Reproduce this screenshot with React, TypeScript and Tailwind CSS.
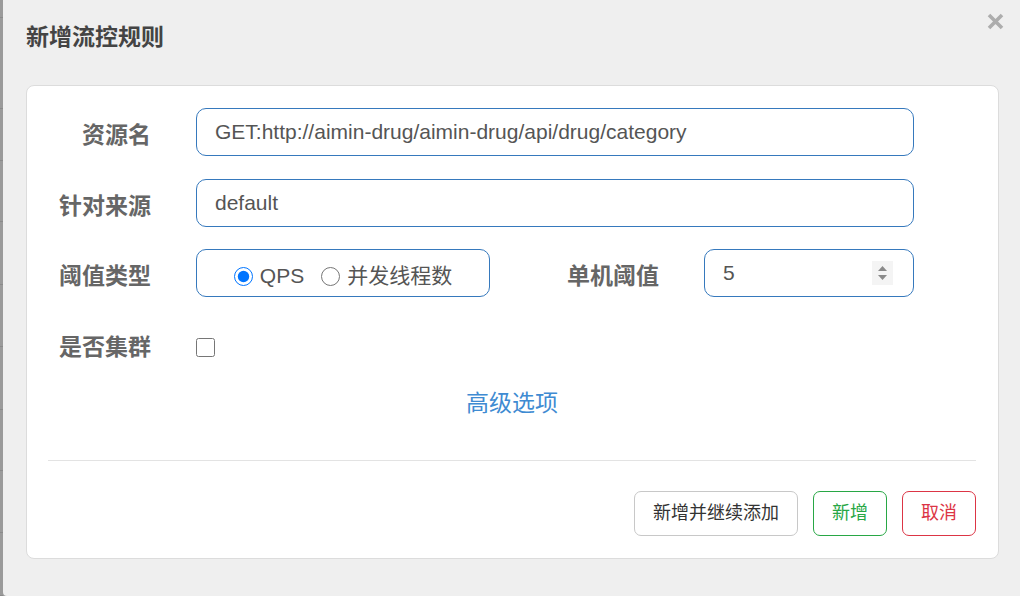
import React from "react";

const FONT = { fontFamily: '"Liberation Sans", "Noto Sans CJK SC", sans-serif' };

const STRIP_ROWS = [18, 91, 53, 61, 63, 62, 63, 62, 62, 63];

function FormLabel({ children, nudge = true }: { children: React.ReactNode; nudge?: boolean }) {
  return (
    <div
      className={
        nudge
          ? "w-[103px] shrink-0 pt-[6px] text-right text-[23px] font-bold leading-[42px] text-[#666]"
          : "w-[103px] shrink-0 text-right text-[23px] font-bold leading-[48px] text-[#666]"
      }
    >
      {children}
    </div>
  );
}

function TextField({ value }: { value: string }) {
  return (
    <input
      readOnly
      defaultValue={value}
      style={FONT}
      className="h-[48px] w-[718px] rounded-[10px] border border-[#3679bd] bg-white px-[18px] text-[21px] text-[#555] outline-none"
    />
  );
}

export default function App() {
  return (
    <div className="flex h-[596px] w-[1020px] overflow-hidden bg-[#9a9a9a]" style={FONT}>
      {/* page behind the overlay */}
      <div className="flex w-[3px] shrink-0 flex-col">
        {STRIP_ROWS.map((h, i) => (
          <div key={i} style={{ height: h }} className="border-b border-[#8a8a8a]" />
        ))}
      </div>

      <div className="relative flex-1 rounded-bl-[4px] bg-[#efefef] pl-[23px]">
        <button
          type="button"
          className="absolute right-[16px] top-[13px] flex h-[17px] w-[17px] items-center justify-center"
        >
          <svg width="17" height="17" viewBox="0 0 17 17">
            <path d="M2 2 L15 15 M15 2 L2 15" stroke="#adadad" strokeWidth="3.6" strokeLinecap="butt" />
          </svg>
        </button>

        <div className="h-[85px] pt-[24px] text-[23px] font-bold leading-[26px] text-[#444]">新增流控规则</div>

        <div className="w-[973px] rounded-[8px] border border-[#dcdcdc] bg-white pb-[22px] pl-[21px] pr-[22px] pt-[22px]">
          <div className="flex gap-[45px]">
            <FormLabel>资源名</FormLabel>
            <TextField value="GET:http://aimin-drug/aimin-drug/api/drug/category" />
          </div>

          <div className="mt-[23px] flex gap-[45px]">
            <FormLabel>针对来源</FormLabel>
            <TextField value="default" />
          </div>

          <div className="mt-[22px] flex">
            <FormLabel>阈值类型</FormLabel>
            <div className="ml-[45px] flex h-[48px] w-[294px] items-center justify-center rounded-[10px] border border-[#3679bd] pt-[6px] text-[21px] text-[#555]">
              <label className="flex items-center gap-[7px]">
                <input type="radio" name="grade" defaultChecked className="m-0 h-[19px] w-[19px] accent-[#0075ff]" />
                QPS
              </label>
              <label className="ml-[17px] flex items-center gap-[7px]">
                <input type="radio" name="grade" className="m-0 h-[19px] w-[19px]" />
                并发线程数
              </label>
            </div>
            <div className="ml-[77px] pt-[6px] text-[23px] font-bold leading-[42px] text-[#666]">单机阈值</div>
            <div className="ml-[45px] flex h-[48px] w-[210px] items-center justify-between rounded-[10px] border border-[#3679bd] pl-[18px] pr-[20px] text-[21px] text-[#555]">
              <span>5</span>
              <svg width="21" height="24" viewBox="0 0 21 24">
                <rect width="21" height="24" fill="#f4f4f4" />
                <path d="M10.5 5 L15 10 L6 10 Z" fill="#8a8a8a" />
                <path d="M10.5 19 L15 14 L6 14 Z" fill="#8a8a8a" />
              </svg>
            </div>
          </div>

          <div className="mt-[26px] flex items-center gap-[45px]">
            <FormLabel nudge={false}>是否集群</FormLabel>
            <input type="checkbox" className="m-0 h-[19px] w-[19px]" />
          </div>

          <div className="mt-[16px] text-center text-[23px] leading-[32px] text-[#3f8bd2]">高级选项</div>

          <div className="mt-[41px] border-t border-[#e3e3e3]" />

          <div className="mt-[30px] flex justify-end gap-[15px] text-[18px]">
            <button type="button" className="h-[45px] w-[164px] rounded-[7px] border border-[#c8c8c8] text-[#333]">
              新增并继续添加
            </button>
            <button type="button" className="h-[45px] w-[74px] rounded-[7px] border border-[#28a745] text-[#28a745]">
              新增
            </button>
            <button type="button" className="h-[45px] w-[74px] rounded-[7px] border border-[#dc3545] text-[#dc3545]">
              取消
            </button>
          </div>
        </div>
      </div>
    </div>
  );
}
